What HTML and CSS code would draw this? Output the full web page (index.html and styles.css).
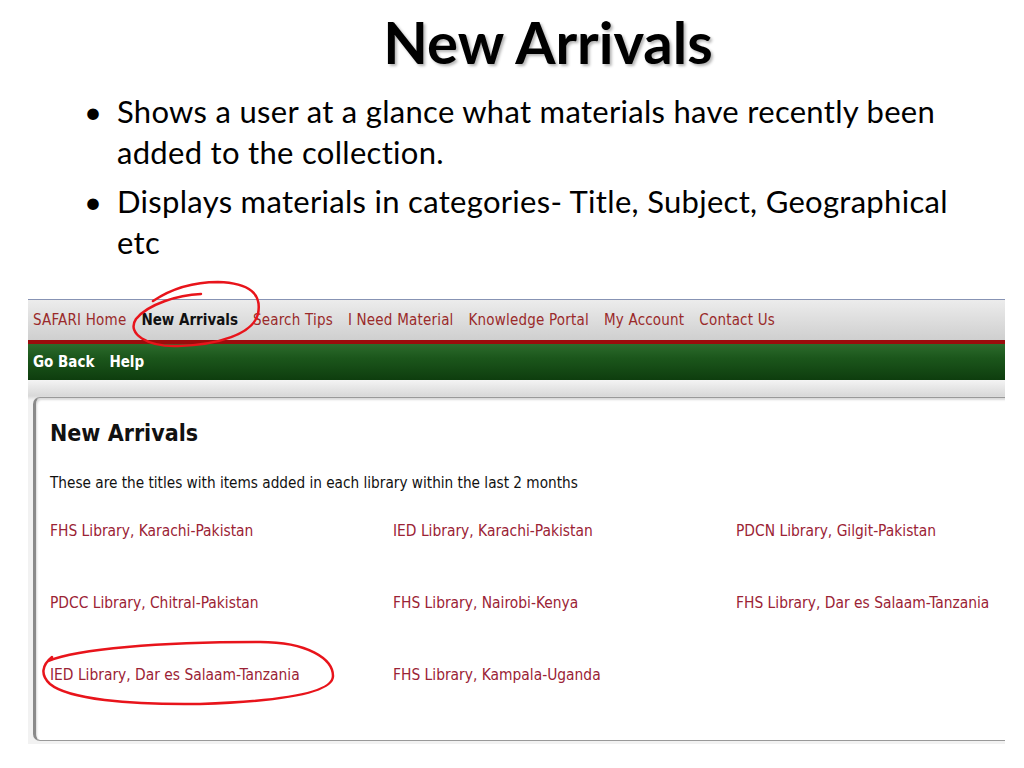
FILE: index.html
```html
<!DOCTYPE html>
<html lang="en">
<head>
  <meta charset="UTF-8" />
  <title>New Arrivals</title>
  <link rel="stylesheet" href="styles.css">
</head>
<body>

  <!-- SLIDE TITLE -->
  <h1 class="slide-title">New Arrivals</h1>

  <ul class="bullets">
    <li>Shows a user at a glance what materials have recently been added to the collection.</li>
    <li>Displays materials in categories- Title, Subject, Geographical etc</li>
  </ul>

  <!-- SCREENSHOT OF THE CATALOGUE -->
  <div class="shot">
    <div class="topnav">
      <a href="#">SAFARI Home</a>
      <a href="#" class="current">New Arrivals</a>
      <a href="#">Search Tips</a>
      <a href="#">I Need Material</a>
      <a href="#">Knowledge Portal</a>
      <a href="#">My Account</a>
      <a href="#">Contact Us</a>
    </div>
    <div class="subnav">
      <a href="#">Go Back</a>
      <a href="#">Help</a>
    </div>

    <div class="panel-wrap">
      <div class="panel">
        <h2>New Arrivals</h2>
        <p class="intro">These are the titles with items added in each library within the last 2 months</p>
        <div class="libraries">
          <a href="#">FHS Library, Karachi-Pakistan</a>
          <a href="#">IED Library, Karachi-Pakistan</a>
          <a href="#">PDCN Library, Gilgit-Pakistan</a>
          <a href="#">PDCC Library, Chitral-Pakistan</a>
          <a href="#">FHS Library, Nairobi-Kenya</a>
          <a href="#">FHS Library, Dar es Salaam-Tanzania</a>
          <a href="#">IED Library, Dar es Salaam-Tanzania</a>
          <a href="#">FHS Library, Kampala-Uganda</a>
        </div>
      </div>
    </div>

    <!-- hand drawn marks -->
    <svg class="marks" width="977" height="445" viewBox="0 0 977 445">
      <path d="M173,-5 C150,-4 120,5 108,20 C98,35 120,48 150,47 C190,46 225,35 230,15 C234,-5 222,-16 190,-17 C160,-17 140,-8 125,2" />
      <path d="M20,362 C50,350 130,343 232,343 C280,343 305,360 305,377 C305,393 260,402 172,405 C100,406 40,400 22,385 C12,376 14,366 24,358" />
    </svg>
  </div>

</body>
</html>
```

FILE: styles.css
```css
* {
  box-sizing: border-box;
}

body {
  margin: 0;
  background: #fff;
  font-family: Lato, 'Open Sans', sans-serif;
  color: #000;
}

/* Slide */
.slide-title {
  margin: 0;
  padding: 10px 0 0 72px;
  height: 91px;
  text-align: center;
  font-size: 58px;
  font-weight: bold;
  line-height: 64px;
  text-shadow: 2px 2px 3px rgba(0,0,0,0.3);
}

.bullets {
  margin: 0;
  padding: 0 0 0 117px;
  width: 965px;
  list-style: none;
  font-size: 31px;
  letter-spacing: 0.3px;
  line-height: 41px;
}

.bullets li {
  position: relative;
  margin-bottom: 8px;
}

.bullets li::before {
  content: "\2022";
  position: absolute;
  left: -33px;
}

/* Screenshot */
.shot {
  position: relative;
  width: 977px;
  height: 445px;
  margin: 36px 0 0 28px;
  font-family: 'DejaVu Sans Condensed', 'DejaVu Sans', sans-serif;
}

.topnav {
  height: 41px;
  border-top: 1px solid #8793b4;
  background: linear-gradient(#ececec, #cfcfcf);
  display: flex;
  align-items: center;
  gap: 15px;
  padding-left: 5px;
  font-size: 15px;
  letter-spacing: 0.2px;
}

.topnav a {
  color: #9a2a2a;
  text-decoration: none;
}

.topnav a.current {
  color: #111;
  font-weight: bold;
  letter-spacing: 0;
}

.subnav {
  height: 40px;
  border-top: 4px solid #9a0c0c;
  background: linear-gradient(#2c6b2c, #1b561b 40%, #0e3d0e);
  display: flex;
  align-items: center;
  gap: 15px;
  padding-left: 5px;
  font-size: 15px;
  font-weight: bold;
}

.subnav a {
  color: #fff;
  text-decoration: none;
}

.panel-wrap {
  height: 364px;
  overflow: hidden;
  background: linear-gradient(#f4f4f4, #d8d8d8 16px, #f2f2f2 20px);
  padding: 17px 0 3px 5px;
}

.panel {
  width: 1000px;
  height: 344px;
  background: #fff;
  border: 1px solid #999;
  border-left: 3px solid #8a8a8a;
  border-radius: 7px 0 0 7px;
  box-shadow: inset 1px 2px 2px rgba(0,0,0,0.15);
  padding: 20px 0 0 14px;
}

.panel h2 {
  margin: 0;
  font-size: 23px;
  line-height: 30px;
  font-weight: bold;
  color: #111;
}

.intro {
  margin: 26px 0 0;
  font-size: 15.2px;
  line-height: 18px;
  color: #111;
}

.libraries {
  margin-top: 30px;
  display: grid;
  grid-template-columns: 343px 343px 300px;
  grid-auto-rows: 72px;
  font-size: 15.4px;
  line-height: 18px;
}

.libraries a {
  color: #9b2335;
  text-decoration: none;
}

.marks {
  position: absolute;
  left: 0;
  top: 0;
  overflow: visible;
  pointer-events: none;
}

.marks path {
  fill: none;
  stroke: #e8141b;
  stroke-width: 2.5;
  stroke-linecap: round;
}
```
